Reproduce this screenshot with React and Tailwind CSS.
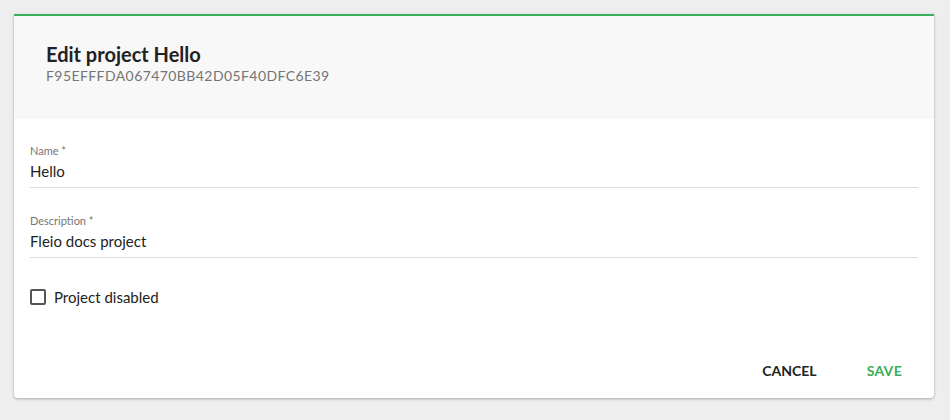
export default function App() {
  return (
    <div className="w-[950px] h-[420px] bg-[#eeeeee] pt-[14px] px-[14px]" style={{ fontFamily: "Lato, 'Open Sans', sans-serif" }}>
      <div className="w-[920px] h-[384px] bg-white border-t-2 border-[#3bb05a] rounded-b-[4px] shadow-[0_1px_3px_rgba(0,0,0,0.3)] flex flex-col">
        <div className="bg-[#f8f8f8] h-[103px] pl-[32px] pt-[26px]">
          <div className="text-[20px] font-bold text-[#222] leading-[24px]">Edit project Hello</div>
          <div className="text-[14px] text-[#757575] leading-[18px] mt-[1px] tracking-[0.42px]">F95EFFFDA067470BB42D05F40DFC6E39</div>
        </div>
        <div className="px-4 pt-[25px] flex flex-col">
          <div className="border-b border-[#dddddd] pb-[6px]">
            <div className="text-[11px] text-[#757575] leading-[14px]">Name *</div>
            <div className="text-[15px] text-[#222] leading-[20px] mt-[3px]">Hello</div>
          </div>
          <div className="border-b border-[#dddddd] pb-[6px] mt-[26px]">
            <div className="text-[11px] text-[#757575] leading-[14px]">Description *</div>
            <div className="text-[15px] text-[#222] leading-[20px] mt-[3px]">Fleio docs project</div>
          </div>
          <div className="flex items-center mt-[29px]">
            <div className="w-[16px] h-[16px] border-2 border-[#555] rounded-[2px]" />
            <span className="ml-[8px] text-[15px] text-[#222] leading-[20px]">Project disabled</span>
          </div>
        </div>
        <div className="flex justify-end items-center gap-[18px] mt-auto mb-[10px] pr-[16px]">
          <button className="px-[16px] h-[36px] text-[14px] font-bold text-[#222]">CANCEL</button>
          <button className="px-[16px] h-[36px] text-[14px] font-bold text-[#3bb05a] tracking-[0.3px]">SAVE</button>
        </div>
      </div>
    </div>
  );
}
